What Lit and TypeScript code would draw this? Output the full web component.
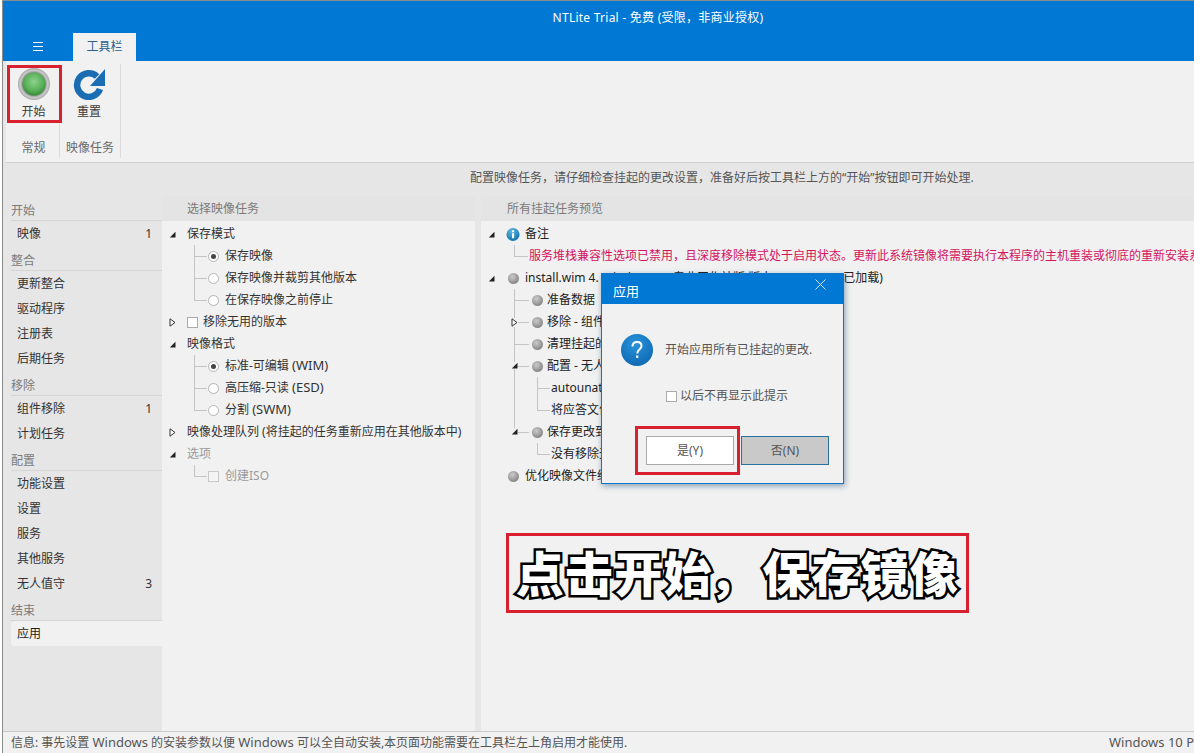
import { LitElement, html, css, svg } from "lit";
import { customElement } from "lit/decorators.js";

const down = html`<svg class="arrow" width="7" height="7" viewBox="0 0 7 7"><path d="M6.5 .8V6.5H.8z" fill="#222"/></svg>`;
const right = html`<svg class="arrow" width="7" height="9" viewBox="0 0 7 9"><path d="M1 .8 6 4.5 1 8.2z" fill="#fff" stroke="#333"/></svg>`;
const bullet = html`<i class="bullet"></i>`;
const info = html`<svg width="15" height="15" viewBox="0 0 15 15"><defs><radialGradient id="ig" cx=".4" cy=".25" r=".8"><stop offset="0" stop-color="#5db6de"/><stop offset="1" stop-color="#0d6fae"/></radialGradient></defs><circle cx="7.5" cy="7.5" r="7" fill="url(#ig)"/><rect x="6.5" y="6" width="2.2" height="5.5" fill="#fff"/><rect x="6.5" y="3" width="2.2" height="2" fill="#fff"/></svg>`;

type Nav = { t: string; n?: string; on?: boolean };
const nav: { h: string; items: Nav[] }[] = [
  { h: "开始", items: [{ t: "映像", n: "1" }] },
  { h: "整合", items: [{ t: "更新整合" }, { t: "驱动程序" }, { t: "注册表" }, { t: "后期任务" }] },
  { h: "移除", items: [{ t: "组件移除", n: "1" }, { t: "计划任务" }] },
  { h: "配置", items: [{ t: "功能设置" }, { t: "设置" }, { t: "服务" }, { t: "其他服务" }, { t: "无人值守", n: "3" }] },
  { h: "结束", items: [{ t: "应用", on: true }] },
];

@customElement("app-root")
export class AppRoot extends LitElement {
  static styles = css`
    :host { display: block; background: #fff; }
    * { box-sizing: border-box; }
    .win {
      position: relative; width: 1192px; margin-left: 2px; height: 753px; overflow: hidden;
      display: flex; flex-direction: column; background: #e6e6e6;
      border-left: 1px solid #8c8c8c; border-top: 1px solid #8c8c8c;
      font: 12px/22px "Noto Sans", "Noto Sans CJK SC", sans-serif; color: #3a3a3a; white-space: nowrap;
    }
    .lat { font-size: 13px; line-height: 16px; }
    .top { height: 60px; background: #0078d4; position: relative; flex: none; display: flex; flex-direction: column; }
    .title { height: 32px; line-height: 34px; color: #fff; text-align: center; padding-left: 119px; letter-spacing: .25px; }
    .tabs { display: flex; height: 28px; align-items: stretch; }
    .menu { width: 70px; display: flex; justify-content: center; padding: 9px 0 0 0; }
    .menu svg { display: block; }
    .tab { width: 63px; background: #f1f1f1; color: #2b5f8c; text-align: center; line-height: 28px; }
    .ribbon { margin-left: 3px; height: 102px; flex: none; background: #f1f1f1; border-bottom: 1px solid #cfcfcf; display: flex; padding-top: 3px; }
    .group { display: flex; flex-direction: column; align-items: center; border-right: 1px solid #dcdcdc; height: 94px; }
    .g1 { width: 54px; padding-left: 2px; }
    .g2 { width: 61px; padding-right: 2px; }
    .btn { height: 66px; flex: none; padding-top: 4px; display: flex; flex-direction: column; align-items: center; }
    .btn span { line-height: 18px; margin-top: 3px; }
    .ball { width: 32px; height: 32px; display: block; }
    .glabel { color: #6a6a6a; margin-top: 9px; line-height: 18px; }
    .g2 .glabel { margin-left: 2px; }
    .msg { height: 33px; flex: none; line-height: 30px; padding-left: 467px; color: #555; }
    .main { flex: 1; display: flex; min-height: 0; }
    .side { width: 159px; flex: none; padding-top: 2px; }
    .gh { margin-left: 8px; height: 23px; line-height: 26px; color: #7b7b7b; border-bottom: 1px solid #d6d6d6; }
    .it { margin-left: 8px; height: 25px; line-height: 25px; padding: 0 10px 0 6px; display: flex; justify-content: space-between; color: #333; }
    .it.on { background: #f1f1f1; border-radius: 4px 0 0 4px; color: #222; }
    .grp { margin-bottom: 2px; }
    .panel { background: #f1f1f1; display: flex; flex-direction: column; overflow: hidden; }
    .p1 { width: 313px; flex: none; margin-right: 6px; }
    .p2 { flex: 1; min-width: 0; }
    .ph { height: 25px; line-height: 26px; background: #e4e4e4; color: #7a7a7a; margin-bottom: 2px; flex: none; }
    .p1 .ph { padding-left: 25px; }
    .p2 .ph { padding-left: 26px; }
    .row { height: 22px; display: flex; align-items: center; color: #333; flex: none; }
    .ex { width: 25px; flex: none; display: flex; justify-content: center; padding-right: 5px; }
    .arrow { display: block; flex: none; }
    .in32 { width: 32px; flex: none; }
    .in33 { width: 33px; flex: none; }
    .conn { position: relative; height: 22px; flex: none; width: 14px; }
    .conn::before { content: ""; position: absolute; left: 0; top: 0; bottom: 0; border-left: 1px solid #c4c4c4; }
    .conn.end::before { bottom: 11px; }
    .conn::after { content: ""; position: absolute; left: 0; right: 1px; top: 11px; border-top: 1px solid #c4c4c4; }
    .conn .arrow { position: absolute; left: -3px; top: 7px; z-index: 1; background: #f1f1f1; }
    .w15 { width: 15px; }
    .w16 { width: 16px; }
    .vline { width: 23px; height: 22px; flex: none; border-left: 1px solid #c4c4c4; }
    .blank { width: 23px; flex: none; }
    .radio { width: 11px; height: 11px; border-radius: 50%; border: 1px solid #b5b5b5; background: #fff; margin-right: 6px; flex: none; display: flex; align-items: center; justify-content: center; }
    .radio.on::after { content: ""; width: 5px; height: 5px; border-radius: 50%; background: #444; }
    .box { width: 11px; height: 11px; border: 1px solid #ababab; background: #fff; margin-right: 5px; flex: none; }
    .box.off { border-color: #c8c8c8; background: #f4f4f4; margin-right: 6px; }
    .dim { color: #9a9a9a; }
    .ic { width: 14px; display: flex; justify-content: center; flex: none; margin-right: 5px; }
    .ic2 { margin-right: 3px; }
    .bullet { width: 11px; height: 11px; border-radius: 50%; display: block; background: radial-gradient(circle at 40% 35%, #cbcbcb, #8a8a8a 70%, #a0a0a0); }
    .red { color: #d4145f; }
    .p2 .blk { color: #222; }
    .status { height: 22px; flex: none; background: #f1f1f1; border-top: 1px solid #c9c9c9; display: flex; line-height: 21px; color: #555; padding-left: 8px; }
    .status .l { width: 1098px; flex: none; }
    .status .r { font-size: 13px; line-height: 21px; }
    .dlg { position: absolute; left: 598px; top: 272px; width: 243px; height: 211px; background: #f1f1f1; border: 1px solid #0e76c4; box-shadow: 1px 2px 6px rgba(0,60,110,.45); display: flex; flex-direction: column; }
    .dt { height: 30px; background: #0078d4; color: #fff; font-size: 13px; line-height: 34px; padding-left: 11px; flex: none; display: flex; justify-content: space-between; }
    .dt svg { margin: 5px 17px 0 0; }
    .dm { display: flex; align-items: center; margin: 30px 0 0 19px; color: #555; line-height: 32px; }
    .dm svg { margin-right: 12px; }
    .dc { display: flex; align-items: center; margin: 18px 0 0 64px; color: #555; line-height: 24px; height: 24px; }
    .dc .box { margin-right: 3px; }
    .db { display: flex; gap: 7px; margin: 28px 0 0 44px; }
    .b { width: 88px; height: 29px; text-align: center; line-height: 28px; color: #555; border: 1px solid #a9a9a9; background: #fff; }
    .b.no { background: #c9c9c9; border-color: #2b6f9e; }
    .hl { position: absolute; border: 3px solid #d9202e; pointer-events: none; }
    .hl1 { left: 4px; top: 64px; width: 55px; height: 58px; }
    .hl2 { left: 632px; top: 425px; width: 105px; height: 49px; }
    .hl3 { left: 503px; top: 532px; width: 463px; height: 80px; padding-bottom: 5px; display: flex; align-items: center; justify-content: center; font-size: 48px; line-height: 60px; font-weight: 900; color: #fff; -webkit-text-stroke: 5px #000; paint-order: stroke fill; font-family: "Noto Sans CJK SC", sans-serif; letter-spacing: 1.3px; }
    .cm { margin: 0 4px 0 -4px; }
  `;

  private radio(t: unknown, on = false, end = false) {
    return html`<div class="row"><i class="in32"></i><i class="conn ${end ? "end" : ""}"></i><i class="radio ${on ? "on" : ""}"></i><span>${t}</span></div>`;
  }
  private l1(t: string, opts: { a?: unknown; end?: boolean } = {}) {
    return html`<div class="row blk"><i class="in33"></i><i class="conn w16 ${opts.end ? "end" : ""}">${opts.a ?? ""}</i><span class="ic ic2">${bullet}</span><span>${t}</span></div>`;
  }
  private l2(t: string, cont: boolean, end: boolean) {
    return html`<div class="row blk"><i class="in33"></i><i class="${cont ? "vline" : "blank"}"></i><i class="conn ${end ? "end" : ""}"></i><span>${t}</span></div>`;
  }

  render() {
    return html`<div class="win">
      <div class="top">
        <div class="title">NTLite Trial - 免费 (受限，非商业授权)</div>
        <div class="tabs">
          <div class="menu"><svg width="10" height="9" viewBox="0 0 10 9"><path d="M0 .5h10M0 4.5h10M0 8.5h10" stroke="#fff"/></svg></div>
          <div class="tab">工具栏</div>
        </div>
      </div>
      <div class="ribbon">
        <div class="group g1">
          <div class="btn">
            <svg class="ball" viewBox="0 0 32 32"><defs>
              <radialGradient id="gr" cx=".5" cy=".5" r=".5"><stop offset=".7" stop-color="#8a8a8a"/><stop offset=".85" stop-color="#c9c9c9"/><stop offset="1" stop-color="#a8a8a8"/></radialGradient>
              <radialGradient id="gb" cx=".5" cy=".4" r=".6"><stop offset="0" stop-color="#8fd28f"/><stop offset=".7" stop-color="#55ad55"/><stop offset="1" stop-color="#358c3a"/></radialGradient>
            </defs><circle cx="16" cy="16" r="16" fill="url(#gr)"/><circle cx="16" cy="16" r="11.5" fill="url(#gb)"/></svg>
            <span>开始</span>
          </div>
          <div class="glabel">常规</div>
        </div>
        <div class="group g2">
          <div class="btn">
            <svg class="ball" viewBox="0 0 32 32">${svg`<path d="M24 8.5A11.8 11.8 0 1 0 27 21" fill="none" stroke="#1b6db3" stroke-width="6.5"/><path d="M32 1V18H17z" fill="#1b6db3"/>`}</svg>
            <span>重置</span>
          </div>
          <div class="glabel">映像任务</div>
        </div>
      </div>
      <div class="msg">配置映像任务，请仔细检查挂起的更改设置，准备好后按工具栏上方的“开始”按钮即可开始处理.</div>
      <div class="main">
        <div class="side">
          ${nav.map((g) => html`<div class="grp"><div class="gh">${g.h}</div>${g.items.map((i) => html`<div class="it ${i.on ? "on" : ""}"><span>${i.t}</span><span>${i.n ?? ""}</span></div>`)}</div>`)}
        </div>
        <div class="panel p1">
          <div class="ph">选择映像任务</div>
          <div class="row"><span class="ex">${down}</span>保存模式</div>
          ${this.radio("保存映像", true)}
          ${this.radio("保存映像并裁剪其他版本")}
          ${this.radio("在保存映像之前停止", false, true)}
          <div class="row"><span class="ex">${right}</span><i class="box"></i>移除无用的版本</div>
          <div class="row"><span class="ex">${down}</span>映像格式</div>
          ${this.radio(html`标准-可编辑 <span class="lat">(WIM)</span>`, true)}
          ${this.radio(html`高压缩-只读 <span class="lat">(ESD)</span>`)}
          ${this.radio(html`分割 <span class="lat">(SWM)</span>`, false, true)}
          <div class="row"><span class="ex">${right}</span>映像处理队列 (将挂起的任务重新应用在其他版本中)</div>
          <div class="row dim"><span class="ex">${down}</span>选项</div>
          <div class="row dim"><i class="in32"></i><i class="conn end"></i><i class="box off"></i>创建ISO</div>
        </div>
        <div class="panel p2">
          <div class="ph">所有挂起任务预览</div>
          <div class="row blk"><span class="ex">${down}</span><span class="ic">${info}</span>备注</div>
          <div class="row red"><i class="in33"></i><i class="conn w15 end"></i>服务堆栈兼容性选项已禁用，且深度移除模式处于启用状态。更新此系统镜像将需要执行本程序的主机重装或彻底的重新安装系统</div>
          <div class="row blk"><span class="ex">${down}</span><span class="ic">${bullet}</span>install.wim 4. Windows 10 专业工作站版 版本 10.0.19041 (已加载)</div>
          ${this.l1("准备数据")}
          ${this.l1("移除 - 组件", { a: right })}
          ${this.l1("清理挂起的更改")}
          ${this.l1("配置 - 无人值守", { a: down })}
          ${this.l2("autounattend.xml", true, false)}
          ${this.l2("将应答文件复制到映像", true, true)}
          ${this.l1("保存更改到映像", { a: down, end: true })}
          ${this.l2("没有移除无用的版本", false, true)}
          <div class="row blk"><span class="ex"></span><span class="ic">${bullet}</span>优化映像文件结构</div>
        </div>
      </div>
      <div class="status"><span class="l">信息: 事先设置 <span class="lat">Windows</span> 的安装参数以便 <span class="lat">Windows</span> 可以全自动安装,本页面功能需要在工具栏左上角启用才能使用.</span><span class="r">Windows 10 Pro</span></div>

      <div class="dlg">
        <div class="dt"><span>应用</span><svg width="11" height="11" viewBox="0 0 11 11"><path d="M.5.5l10 10M10.5.5l-10 10" stroke="#cfe4f5" fill="none"/></svg></div>
        <div class="dm"><svg width="32" height="32" viewBox="0 0 32 32"><defs><radialGradient id="qg" cx=".45" cy=".3" r=".8"><stop offset="0" stop-color="#2a94dc"/><stop offset="1" stop-color="#0a64ae"/></radialGradient></defs><circle cx="16" cy="16" r="16" fill="url(#qg)"/><path d="M11.5 12.5c0-3 2-4.5 4.6-4.5s4.4 1.6 4.4 4c0 3.6-4.2 3.6-4.2 7.4" fill="none" stroke="#fff" stroke-width="2"/><rect x="15.1" y="21.5" width="2.2" height="2.4" fill="#fff"/></svg><span>开始应用所有已挂起的更改.</span></div>
        <div class="dc"><i class="box"></i>以后不再显示此提示</div>
        <div class="db"><div class="b">是(Y)</div><div class="b no">否(N)</div></div>
      </div>
      <div class="hl hl1"></div>
      <div class="hl hl2"></div>
      <div class="hl hl3"><span>点击开始<span class="cm">，</span>保存镜像</span></div>
    </div>`;
  }
}
